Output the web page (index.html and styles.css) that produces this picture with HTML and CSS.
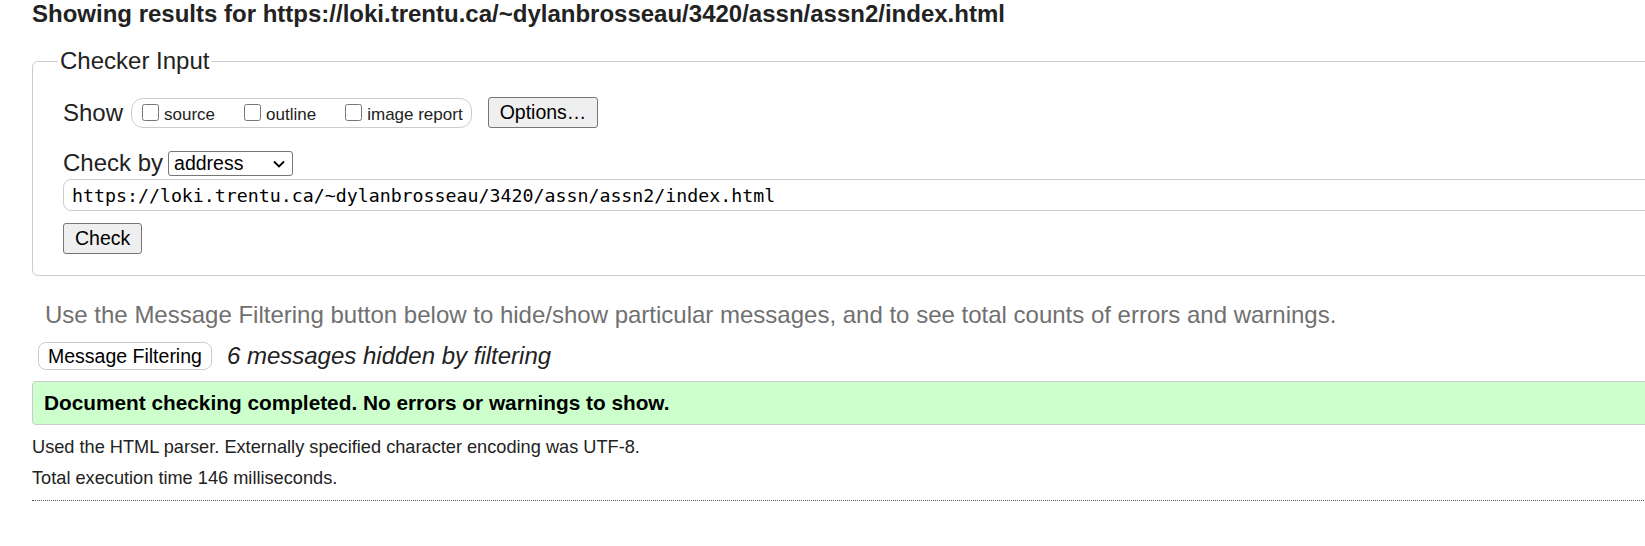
FILE: index.html
```html
<!DOCTYPE html>
<html lang="en">
<head>
<meta charset="utf-8">
<title>Validator results</title>
<link rel="stylesheet" href="styles.css">
</head>
<body>
<div class="page">
  <h2 class="heading">Showing results for https://loki.trentu.ca/~dylanbrosseau/3420/assn/assn2/index.html</h2>
  <fieldset class="checker">
    <legend class="checker-legend">Checker Input</legend>
    <div class="show-row">
      <span class="row-label">Show</span>
      <span class="opts-group">
        <label class="opt"><input type="checkbox" class="cb"><span>source</span></label>
        <label class="opt"><input type="checkbox" class="cb"><span>outline</span></label>
        <label class="opt"><input type="checkbox" class="cb"><span>image report</span></label>
      </span>
      <button class="btn btn-options" type="button">Options…</button>
    </div>
    <div class="checkby-row">
      <span class="row-label">Check by</span>
      <span class="select-wrap">
        <select class="by-select"><option>address</option></select>
        <svg class="chev" width="12" height="8" viewBox="0 0 12 8" aria-hidden="true"><path d="M1 1.5 L6 6.5 L11 1.5" fill="none" stroke="#000" stroke-width="1.8"/></svg>
      </span>
    </div>
    <input class="url" type="text" value="https://loki.trentu.ca/~dylanbrosseau/3420/assn/assn2/index.html">
    <div class="check-row"><button class="btn btn-check" type="button">Check</button></div>
  </fieldset>
  <p class="filter-note">Use the Message Filtering button below to hide/show particular messages, and to see total counts of errors and warnings.</p>
  <div class="filter-row">
    <button class="btn-filter" type="button">Message Filtering</button>
    <span class="hidden-count">6 messages hidden by filtering</span>
  </div>
  <div class="success">Document checking completed. No errors or warnings to show.</div>
  <p class="info">Used the HTML parser. Externally specified character encoding was UTF-8.</p>
  <p class="info info-next">Total execution time 146 milliseconds.</p>
  <hr class="dotted">
</div>
</body>
</html>
```

FILE: styles.css
```css
html {
  overflow: hidden;
}

body {
  margin: 0;
  background: #fff;
  color: #222;
  font-family: "Liberation Sans", Arial, sans-serif;
}

.page {
  width: 1800px;
  padding-left: 32px;
}

.heading {
  margin: 0;
  font-size: 24px;
  font-weight: bold;
  line-height: 27px;
  color: #222;
}

.checker {
  margin: 20px 0 0;
  border: 1px solid #ccc;
  border-radius: 6px;
  padding: 22px 30px 21px;
  min-width: 0;
}

.checker-legend {
  font-size: 24px;
  padding: 0 2px;
  margin-left: -5px;
  color: #222;
}

.show-row {
  display: flex;
  align-items: center;
}

.row-label {
  font-size: 24px;
  margin-right: 8px;
}

.opts-group {
  display: inline-flex;
  align-items: center;
  height: 28px;
  border: 1px solid #ccc;
  border-radius: 12px;
  padding: 0 8px 0 10px;
}

.opt {
  display: inline-flex;
  align-items: center;
  font-size: 17px;
  margin-right: 29px;
}

.opt:last-child {
  margin-right: 0;
}

.opt span {
  padding-top: 5px;
}

.cb {
  width: 17px;
  height: 17px;
  margin: 0 5px 0 0;
}

.btn {
  font-family: "Liberation Sans", Arial, sans-serif;
  font-size: 19.5px;
  color: #000;
  background: #efefef;
  border: 1px solid #767676;
  border-radius: 3px;
  height: 31px;
  padding: 0 11px;
}

.btn-options {
  margin-left: 16px;
}

.checkby-row {
  display: flex;
  align-items: center;
  margin-top: 21px;
}

.checkby-row .row-label {
  margin-right: 5px;
}

.select-wrap {
  position: relative;
  display: inline-block;
  height: 25px;
}

.by-select {
  -webkit-appearance: none;
  appearance: none;
  display: block;
  box-sizing: border-box;
  width: 125px;
  height: 25px;
  padding: 0 0 0 5px;
  font-family: "Liberation Sans", Arial, sans-serif;
  font-size: 19.5px;
  color: #000;
  background: #fff;
  border: 1px solid #767676;
  border-radius: 3px;
}

.chev {
  position: absolute;
  right: 8px;
  top: 9px;
  pointer-events: none;
}

.url {
  display: block;
  box-sizing: border-box;
  width: 1700px;
  height: 32px;
  margin-top: 2px;
  padding: 0 8px;
  border: 1px solid #ccc;
  border-radius: 8px;
  font-family: "DejaVu Sans Mono", "Liberation Mono", monospace;
  font-size: 18.25px;
  color: #000;
}

.check-row {
  margin-top: 12px;
}

.filter-note {
  margin: 25px 0 0;
  padding-left: 13px;
  font-size: 24px;
  color: #707070;
}

.filter-row {
  display: flex;
  align-items: center;
  margin-top: 13px;
  padding-left: 6px;
}

.btn-filter {
  font-family: "Liberation Sans", Arial, sans-serif;
  font-size: 19.5px;
  color: #000;
  background: #fff;
  border: 1px solid #ccc;
  border-radius: 8px;
  height: 28px;
  padding: 0 9px;
}

.hidden-count {
  margin-left: 15px;
  font-size: 24px;
  font-style: italic;
}

.success {
  margin-top: 11px;
  border: 1px solid #ccc;
  border-radius: 4px;
  background: #ccffcc;
  color: #000;
  font-size: 20.8px;
  font-weight: bold;
  padding: 9px 11px;
}

.info {
  margin: 12px 0 0;
  font-size: 18.2px;
  line-height: 21px;
  color: #222;
}

.info-next {
  margin-top: 10px;
}

.dotted {
  margin: 11px 0 0;
  border: 0;
  border-top: 1px dotted #555;
  height: 0;
}
```
